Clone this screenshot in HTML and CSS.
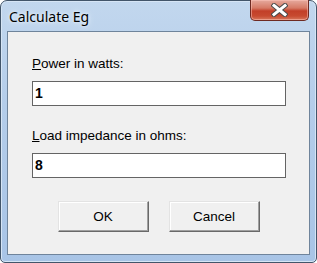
FILE: index.html
```html
<!DOCTYPE html>
<html lang="en">
  <head>
    <meta charset="UTF-8" />
    <title>Calculate Eg</title>
    <link rel="stylesheet" href="styles.css">
  </head>

  <body>
    <div class="window">
      <div class="titlebar">
        <span class="title">Calculate Eg</span>
        <div class="close">
          <svg width="17" height="14" viewBox="0 0 17 14">
            <path d="M3 2.5 L14 11.5 M14 2.5 L3 11.5" stroke="#4a4a4a" stroke-width="5" stroke-linecap="square" />
            <path d="M3 2.5 L14 11.5 M14 2.5 L3 11.5" stroke="#fff" stroke-width="3" stroke-linecap="square" />
          </svg>
        </div>
      </div>

      <div class="client">
        <label class="label label-power"><u>P</u>ower in watts:</label>
        <div class="field">1</div>

        <label class="label label-load"><u>L</u>oad impedance in ohms:</label>
        <div class="field">8</div>

        <div class="buttons">
          <button class="btn">OK</button>
          <button class="btn">Cancel</button>
        </div>
      </div>
    </div>
  </body>
</html>
```

FILE: styles.css
```css
* {
  margin: 0;
  padding: 0;
  box-sizing: border-box;
}

body {
  background-color: #fff;
  font-family: "Liberation Sans", Arial, sans-serif;
}

.window {
  width: 317px;
  height: 263px;
  border: 1px solid #42556a;
  border-radius: 7px 7px 5px 5px;
  background: linear-gradient(to bottom, #c2d7ee 0%, #b4cdea 40%, #a8c4e6 100%);
  padding: 0 6px 7px 6px;
  display: flex;
  flex-direction: column;
  box-shadow: inset 0 0 0 1px #d6e5f5;
}

.titlebar {
  height: 30px;
  display: flex;
  align-items: flex-start;
  justify-content: space-between;
}

.title {
  font-family: "Noto Sans", sans-serif;
  font-size: 14px;
  color: #000;
  margin-top: 6px;
  margin-left: 2px;
  text-shadow: 0 0 6px #e8f1fb, 0 0 3px #eef5fc;
}

.close {
  width: 59px;
  height: 21px;
  margin-top: -1px;
  margin-right: 1px;
  border: 1px solid #6e2a22;
  border-top: none;
  border-radius: 0 0 5px 5px;
  background: linear-gradient(to bottom, #e6aa9e 0%, #d67a66 40%, #c23f28 55%, #c74a30 80%, #d7775c 100%);
  box-shadow: inset 0 0 0 1px rgba(255, 200, 190, 0.5);
  display: flex;
  align-items: center;
  justify-content: center;
}

.client {
  flex: 1;
  border: 1px solid #6f849b;
  background-color: #f0f0f0;
  padding: 24px 22px 0 24px;
  display: flex;
  flex-direction: column;
}

.label {
  font-size: 13.5px;
  line-height: 15px;
  color: #000;
}

.label-load {
  margin-top: 22px;
}

.field {
  width: 254px;
  height: 25px;
  margin-top: 10px;
  border: 1px solid #646464;
  background-color: #fff;
  font-size: 14px;
  font-weight: bold;
  line-height: 23px;
  padding-left: 2px;
}

.buttons {
  display: flex;
  justify-content: center;
  gap: 20px;
  margin-top: 23px;
  margin-right: -22px;
  margin-left: -24px;
}

.btn {
  width: 91px;
  height: 31px;
  font-family: "Liberation Sans", Arial, sans-serif;
  font-size: 13.5px;
  color: #000;
  background-color: #f0f0f0;
  border: 1px solid;
  border-color: #e3e3e3 #696969 #696969 #e3e3e3;
  box-shadow: inset -1px -1px 0 #a0a0a0, inset 1px 1px 0 #fff;
}
```
